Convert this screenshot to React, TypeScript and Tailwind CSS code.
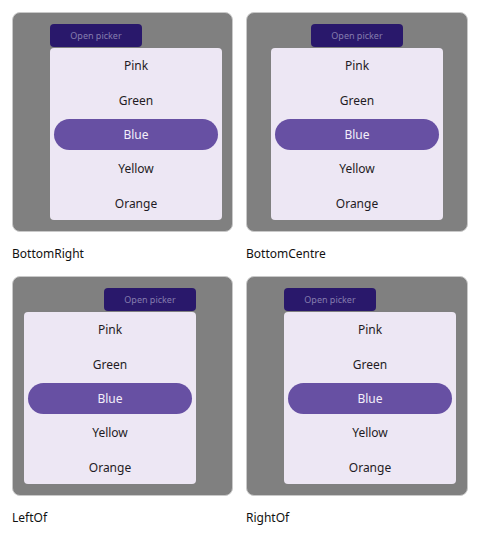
import React from "react";

const items = ["Pink", "Green", "Blue", "Yellow", "Orange"];

function Panel({ label, btnMl, popMl }: { label: string; btnMl: string; popMl: string }) {
  return (
    <div className="flex flex-col">
      <div className="h-[220px] rounded-[8px] border border-[#c9c9c9] bg-[#808080] pt-[11px]">
        <div
          className={`${btnMl} flex h-[23px] w-[92px] items-center justify-center rounded-[4px] bg-[#29186b] text-[9px] text-[#857cae]`}
        >
          Open picker
        </div>
        <div className={`${popMl} mt-[1px] flex h-[172px] w-[172px] flex-col rounded-[4px] bg-[#ede7f4]`}>
          {items.map((it) => (
            <div key={it} className="flex flex-1 items-center justify-center px-[4px] pt-[2px]">
              {it === "Blue" ? (
                <div className="-mt-[2px] flex h-[31px] w-full items-center justify-center rounded-full bg-[#6750a3] pt-[2px] text-[12px] text-[#f3effa]">
                  {it}
                </div>
              ) : (
                <span className="text-[12px] text-[#1f1b24]">{it}</span>
              )}
            </div>
          ))}
        </div>
      </div>
      <div className="mt-[14px] h-[16px] text-[12px] leading-[16px] text-[#111]">{label}</div>
    </div>
  );
}

export default function App() {
  return (
    <div
      className="h-[536px] w-[480px] bg-white pl-[12px] pt-[12px]"
      style={{ fontFamily: '"Noto Sans", "Open Sans", sans-serif' }}
    >
      <div className="grid grid-cols-[221px_222px] gap-x-[13px] gap-y-[14px]">
        <Panel label="BottomRight" btnMl="ml-[37px]" popMl="ml-[37px]" />
        <Panel label="BottomCentre" btnMl="ml-[64px]" popMl="ml-[24px]" />
        <Panel label="LeftOf" btnMl="ml-[91px]" popMl="ml-[11px]" />
        <Panel label="RightOf" btnMl="ml-[37px]" popMl="ml-[37px]" />
      </div>
    </div>
  );
}
